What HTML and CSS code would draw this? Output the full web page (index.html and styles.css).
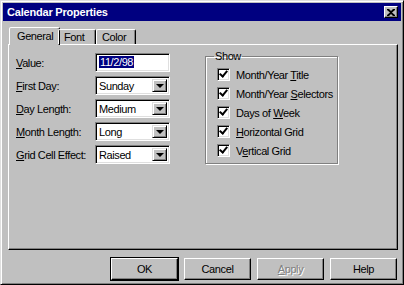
FILE: index.html
```html
<!DOCTYPE html>
<html lang="en">
<head>
  <meta charset="UTF-8">
  <title>Calendar Properties</title>
  <link rel="stylesheet" href="styles.css">
</head>
<body>

<div class="window">
  <div class="titlebar">
    <span class="title">Calendar Properties</span>
    <span class="close">
      <svg width="8" height="7" viewBox="0 0 8 7"><path d="M0 0h2l2 2 2-2h2v1L5 3.5 8 6v1H6L4 5 2 7H0V6l3-2.5L0 1z" fill="#000"/></svg>
    </span>
  </div>

  <div class="content">
    <div class="tabs">
      <div class="tab active">General</div>
      <div class="tab">Font</div>
      <div class="tab">Color</div>
    </div>

    <div class="panel">
      <div class="form">
        <label><u>V</u>alue:</label>
        <div class="field text"><span class="selected">11/2/98</span></div>

        <label><u>F</u>irst Day:</label>
        <div class="field combo"><span>Sunday</span><span class="arrow"></span></div>

        <label><u>D</u>ay Length:</label>
        <div class="field combo"><span>Medium</span><span class="arrow"></span></div>

        <label><u>M</u>onth Length:</label>
        <div class="field combo"><span>Long</span><span class="arrow"></span></div>

        <label><u>G</u>rid Cell Effect:</label>
        <div class="field combo"><span>Raised</span><span class="arrow"></span></div>
      </div>

      <fieldset class="group">
        <legend>Show</legend>
        <div class="check"><span class="box"></span><span>Month/Year <u>T</u>itle</span></div>
        <div class="check"><span class="box"></span><span>Month/Year <u>S</u>electors</span></div>
        <div class="check"><span class="box"></span><span>Days of <u>W</u>eek</span></div>
        <div class="check"><span class="box"></span><span><u>H</u>orizontal Grid</span></div>
        <div class="check"><span class="box"></span><span>V<u>e</u>rtical Grid</span></div>
      </fieldset>
    </div>

    <div class="buttons">
      <div class="button default">OK</div>
      <div class="button">Cancel</div>
      <div class="button disabled"><span><u>A</u>pply</span></div>
      <div class="button">Help</div>
    </div>
  </div>
</div>

</body>
</html>
```

FILE: styles.css
```css
body {
  margin: 0;
  background-color: #c0c0c0;
  font-family: "Liberation Sans", Arial, sans-serif;
  font-size: 11px;
  letter-spacing: -0.4px;
  color: #000;
}

.window {
  width: 404px;
  height: 285px;
  box-sizing: border-box;
  background-color: #c0c0c0;
  border: 1px solid;
  border-color: #dfdfdf #000 #000 #dfdfdf;
  box-shadow: inset 1px 1px 0 #fff, inset -1px -1px 0 #808080;
  padding: 2px;
}

.titlebar {
  display: flex;
  align-items: center;
  justify-content: space-between;
  height: 18px;
  padding: 0 3px 0 4px;
  background-color: #000080;
}

.title {
  color: #fff;
  font-weight: bold;
  font-size: 11px;
  letter-spacing: -0.2px;
}

.close {
  display: flex;
  align-items: center;
  justify-content: center;
  width: 14px;
  height: 12px;
  box-sizing: border-box;
  background-color: #c0c0c0;
  border: 1px solid;
  border-color: #fff #000 #000 #fff;
  box-shadow: inset -1px -1px 0 #808080;
}

.content {
  padding: 5px 3px 0 5px;
}

.tabs {
  display: flex;
  align-items: flex-end;
  height: 18px;
  padding-left: 3px;
  position: relative;
  z-index: 1;
}

.tab {
  height: 15px;
  line-height: 15px;
  padding: 0 0 0 5px;
  box-sizing: border-box;
  border: 1px solid;
  border-bottom: none;
  border-color: #fff #000 transparent #fff;
  border-radius: 2px 2px 0 0;
  box-shadow: inset -1px 0 0 #808080;
  white-space: nowrap;
}

.tab:nth-child(2) {
  width: 38px;
}

.tab:nth-child(3) {
  width: 40px;
}

.tab.active {
  width: 51px;
  height: 18px;
  line-height: 17px;
  margin-left: -2px;
  margin-right: -2px;
  padding-left: 7px;
  margin-bottom: -1px;
  background-color: #c0c0c0;
}

.panel {
  display: flex;
  height: 196px;
  padding: 8px 8px 0 7px;
  border: 1px solid;
  border-color: #fff #000 #000 #fff;
  box-shadow: inset -1px -1px 0 #808080;
}

.form {
  display: grid;
  grid-template-columns: 79px 75px;
  grid-auto-rows: 19px;
  row-gap: 4px;
  align-items: center;
  align-content: start;
  white-space: nowrap;
}

.field {
  display: flex;
  align-items: center;
  height: 19px;
  box-sizing: border-box;
  background-color: #fff;
  border: 1px solid;
  border-color: #808080 #fff #fff #808080;
  box-shadow: inset 1px 1px 0 #000, inset -1px -1px 0 #dfdfdf;
  padding: 0 2px 0 3px;
}

.field.text {
  margin-top: -1px;
}

.selected {
  background-color: #000080;
  color: #fff;
  padding: 0 1px;
}

.combo {
  justify-content: space-between;
  padding-right: 2px;
}

.arrow {
  width: 15px;
  height: 13px;
  box-sizing: border-box;
  background-color: #c0c0c0;
  border: 1px solid;
  border-color: #dfdfdf #000 #000 #dfdfdf;
  box-shadow: inset 1px 1px 0 #fff, inset -1px -1px 0 #808080;
  position: relative;
}

.arrow::after {
  content: "";
  position: absolute;
  left: 3px;
  top: 4px;
  border-left: 4px solid transparent;
  border-right: 4px solid transparent;
  border-top: 4px solid #000;
}

.group {
  margin: -3px 0 0 35px;
  padding: 3px 0 3px 11px;
  width: 120px;
  align-self: flex-start;
  border: 1px solid #808080;
  box-shadow: 1px 1px 0 #fff, inset 1px 1px 0 #fff;
}

.group legend {
  padding: 0 1px;
  margin-left: -3px;
}

.check {
  display: flex;
  align-items: center;
  gap: 6px;
  height: 19px;
  white-space: nowrap;
}

.box {
  position: relative;
  flex: none;
  width: 13px;
  height: 13px;
  box-sizing: border-box;
  background-color: #fff;
  border: 1px solid;
  border-color: #808080 #fff #fff #808080;
  box-shadow: inset 1px 1px 0 #000, inset -1px -1px 0 #dfdfdf;
}

.box::after {
  content: "";
  position: absolute;
  left: 3px;
  top: 0;
  width: 3px;
  height: 6px;
  border: solid #000;
  border-width: 0 2px 2px 0;
  transform: rotate(40deg);
}

.buttons {
  display: flex;
  justify-content: flex-end;
  gap: 6px;
  margin-top: 8px;
  padding-right: 1px;
}

.button {
  display: flex;
  align-items: center;
  justify-content: center;
  width: 67px;
  height: 22px;
  box-sizing: border-box;
  border: 1px solid;
  border-color: #fff #000 #000 #fff;
  box-shadow: inset -1px -1px 0 #808080;
}

.button.default {
  outline: 1px solid #000;
}

.button.disabled {
  color: #808080;
  text-shadow: 1px 1px 0 #fff;
}
```
